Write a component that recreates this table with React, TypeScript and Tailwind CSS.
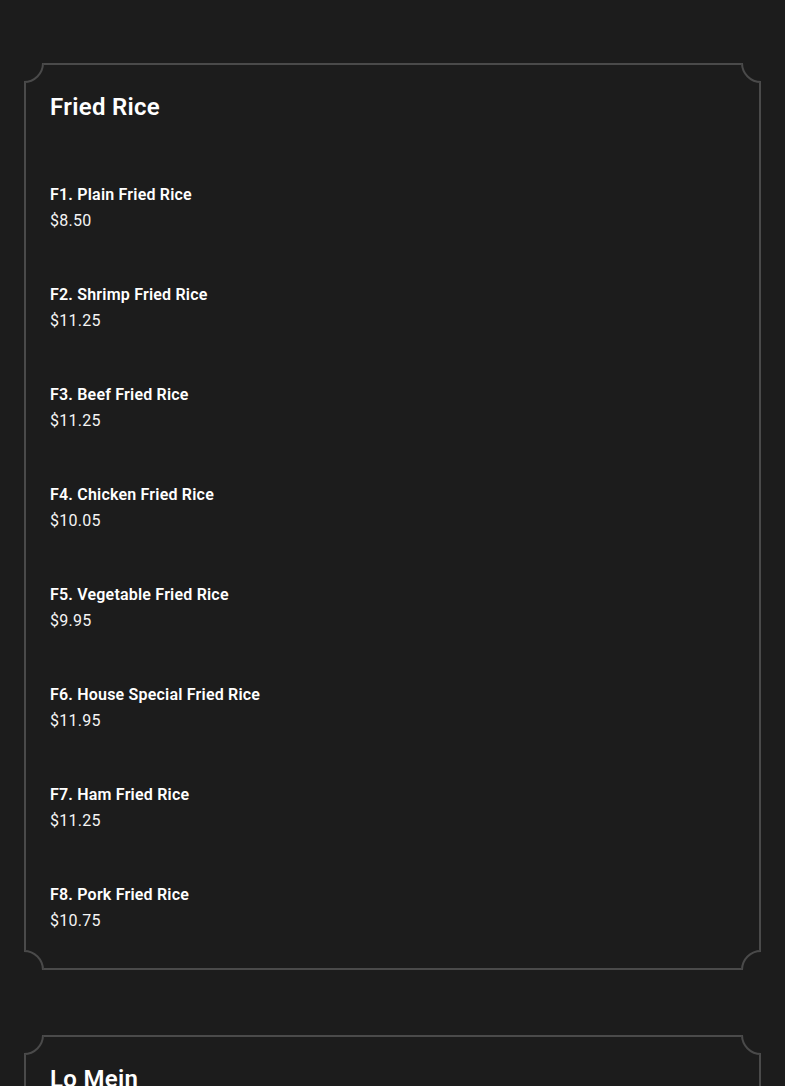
import React from 'react';

type Item = { name: string; price: string };

const friedRice: Item[] = [
  { name: 'F1. Plain Fried Rice', price: '$8.50' },
  { name: 'F2. Shrimp Fried Rice', price: '$11.25' },
  { name: 'F3. Beef Fried Rice', price: '$11.25' },
  { name: 'F4. Chicken Fried Rice', price: '$10.05' },
  { name: 'F5. Vegetable Fried Rice', price: '$9.95' },
  { name: 'F6. House Special Fried Rice', price: '$11.95' },
  { name: 'F7. Ham Fried Rice', price: '$11.25' },
  { name: 'F8. Pork Fried Rice', price: '$10.75' },
];

const loMein: Item[] = [
  { name: 'L1. Plain Lo Mein', price: '$8.50' },
  { name: 'L2. Shrimp Lo Mein', price: '$11.25' },
];

// scalloped corner: a clipped page-coloured square with a ring centred on the card corner
function Corner({ pos, ring }: { pos: string; ring: string }) {
  return (
    <span className={`absolute w-[20px] h-[20px] overflow-hidden bg-[#1c1c1c] ${pos}`}>
      <span className={`absolute w-[40px] h-[40px] rounded-full border-2 border-[#4a4a4a] ${ring}`} />
    </span>
  );
}

function MenuCard({ title, items }: { title: string; items: Item[] }) {
  return (
    <section className="relative border-2 border-[#4a4a4a] px-[24px] pt-[26px] pb-[10px]">
      <Corner pos="-top-[2px] -left-[2px]" ring="-top-[20px] -left-[20px]" />
      <Corner pos="-top-[2px] -right-[2px]" ring="-top-[20px] -right-[20px]" />
      <Corner pos="-bottom-[2px] -left-[2px]" ring="-bottom-[20px] -left-[20px]" />
      <Corner pos="-bottom-[2px] -right-[2px]" ring="-bottom-[20px] -right-[20px]" />
      <h2 className="relative text-[24px] leading-[32px] font-semibold tracking-[0.3px] text-white">{title}</h2>
      <ul className="relative mt-[35px]">
        {items.map((it) => (
          <li key={it.name} className="py-6">
            <div className="text-[16px] leading-[26px] font-semibold tracking-[0.2px] text-white">{it.name}</div>
            <div className="text-[16px] leading-[26px] tracking-[0.25px] text-[#f4f4f4]">{it.price}</div>
          </li>
        ))}
      </ul>
    </section>
  );
}

export default function App() {
  return (
    <div
      className="min-h-screen bg-[#1c1c1c] px-6 pt-[63px] pb-16 flex flex-col gap-[65px]"
      style={{ fontFamily: 'Roboto, "Liberation Sans", sans-serif' }}
    >
      <MenuCard title="Fried Rice" items={friedRice} />
      <MenuCard title="Lo Mein" items={loMein} />
    </div>
  );
}
